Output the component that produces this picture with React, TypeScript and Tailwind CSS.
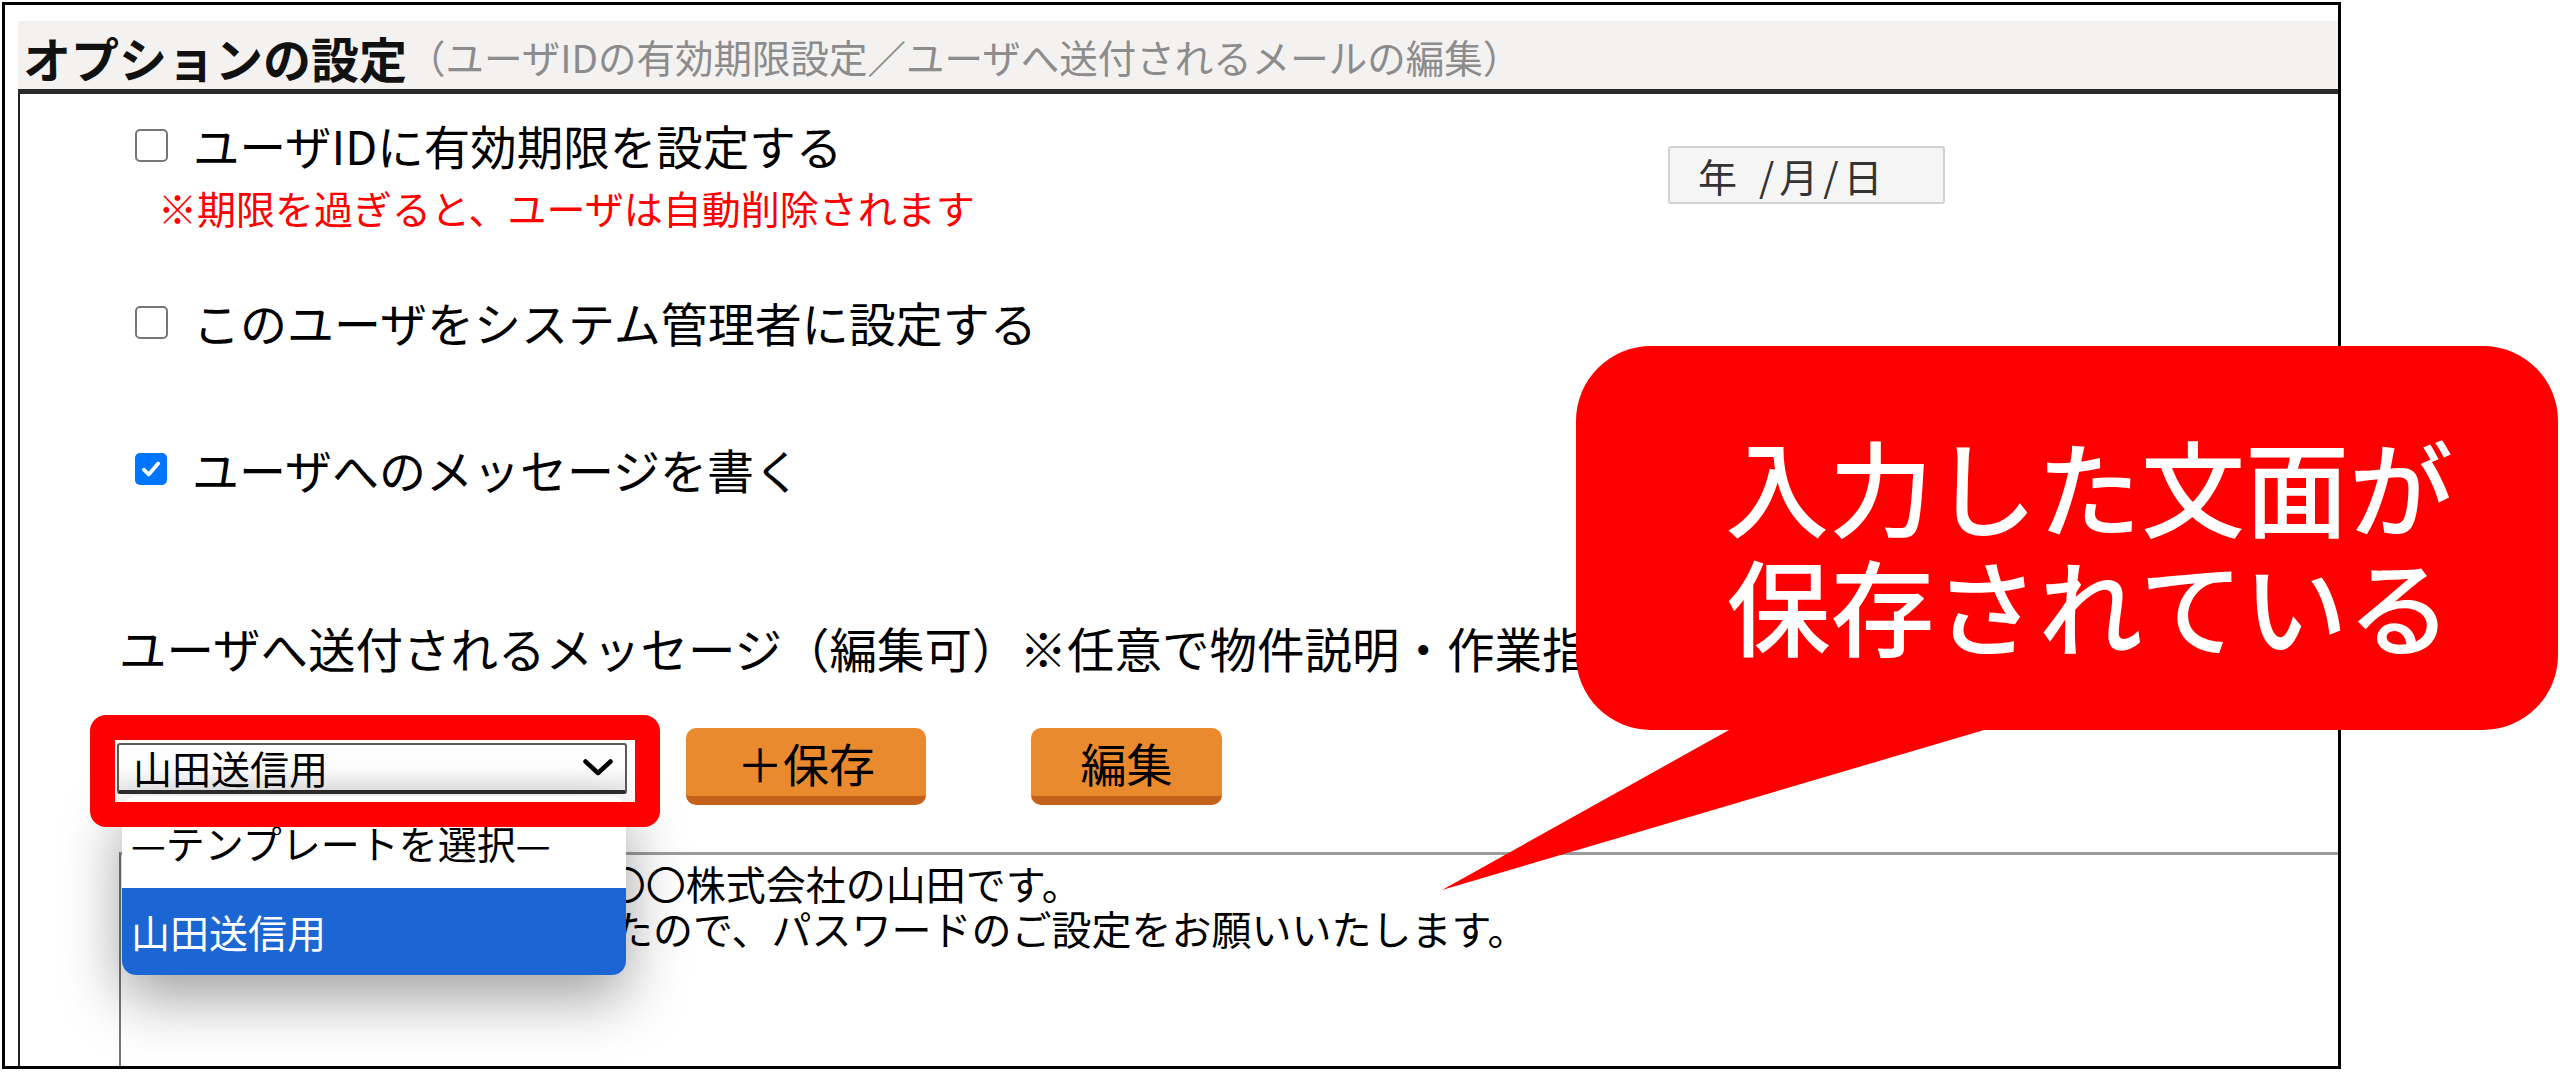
import React from "react";

function Checkbox({ checked = false }: { checked?: boolean }) {
  if (checked) {
    return (
      <span className="flex h-[32px] w-[32px] shrink-0 items-center justify-center rounded-[5px] bg-[#0075ff]">
        <svg viewBox="0 0 16 16" className="h-[26px] w-[26px]">
          <path d="M3.6 8.4 L6.6 11.4 L12.4 4.6" fill="none" stroke="white" strokeWidth="2.3" strokeLinecap="round" strokeLinejoin="round" />
        </svg>
      </span>
    );
  }
  return <span className="h-[33px] w-[33px] shrink-0 rounded-[5px] border-2 border-[#767676] bg-white" />;
}

function OrangeButton({ label, width }: { label: string; width: string }) {
  return (
    <button className={`${width} flex h-[77px] items-center justify-center rounded-[10px] border-b-[9px] border-[#c4621b] bg-[#e88a2d] text-[46px] leading-none text-black`}>
      {label}
    </button>
  );
}

function TemplateSelect() {
  return (
    <div className="relative ml-[97px] mt-[15px]">
      <div className="relative z-10 flex h-[51px] w-[510px] items-center justify-between rounded-[3px] border-2 border-b-[4px] border-[#5a5a5a] border-b-[#2e2e2e] bg-gradient-to-b from-white via-white to-[#ececec] pl-[14px] pr-[12px]">
        <span className="text-[39px] leading-none">山田送信用</span>
        <svg width="30" height="17" viewBox="0 0 30 17">
          <polyline points="2.5,2.5 15,14 27.5,2.5" fill="none" stroke="black" strokeWidth="4.5" strokeLinecap="round" strokeLinejoin="round" />
        </svg>
      </div>

      {/* opened option list */}
      <div className="absolute left-[5px] top-[53px] z-10 w-[504px] overflow-hidden rounded-[14px] bg-white shadow-[0_22px_60px_rgba(0,0,0,0.38)]">
        <div className="flex h-[92px] items-center pl-[9px] text-[39px] leading-none">—テンプレートを選択—</div>
        <div className="flex h-[87px] items-center bg-[#1b66d2] pl-[9px] text-[39px] leading-none text-white">山田送信用</div>
      </div>

      {/* annotation frame */}
      <div className="pointer-events-none absolute left-[-27px] top-[-28px] z-20 h-[112px] w-[570px] rounded-[16px] border-[25px] border-[#ff0000]" />
    </div>
  );
}

function OptionPanel() {
  return (
    <div className="flex min-h-0 flex-1 flex-col">
      <div className="flex h-[73px] shrink-0 items-center border-b-[5px] border-[#2b2b2b] bg-[#f3f2f1] pl-[5px] pt-[3px]">
        <span className="text-[48px] font-bold leading-none text-[#111]">オプションの設定</span>
        <span className="text-[38.5px] leading-none text-[#8c8c8c]">（ユーザIDの有効期限設定／ユーザへ送付されるメールの編集）</span>
      </div>

      <div className="flex min-h-0 flex-1 flex-col border-l-2 border-[#222] pt-[23px]">
        <div className="flex">
          <div className="ml-[115px] w-[1533px] shrink-0">
            <label className="flex h-[56px] items-center gap-[25px] text-[46.5px] leading-[56px]">
              <Checkbox />
              ユーザIDに有効期限を設定する
            </label>
            <p className="ml-[23px] mt-[10px] text-[39px] leading-[48px] text-[#ff0000]">※期限を過ぎると、ユーザは自動削除されます</p>
          </div>
          <div className="mt-[29px] flex h-[58px] w-[277px] items-center rounded-[3px] border-2 border-[#d2d2d2] bg-[#f5f5f5] pl-[28px] text-[39px] leading-none text-[#333]">
            <span>年</span>
            <span className="ml-[22px] tracking-[5px]">/月/日</span>
          </div>
        </div>

        <label className="ml-[115px] mt-[63px] flex h-[56px] items-center gap-[25px] text-[47px] leading-[56px]">
          <Checkbox />
          このユーザをシステム管理者に設定する
        </label>

        <label className="ml-[115px] mt-[91px] flex h-[56px] items-center gap-[25px] text-[47px] leading-[56px]">
          <Checkbox checked />
          ユーザへのメッセージを書く
        </label>

        <p className="ml-[99px] mt-[123px] whitespace-nowrap text-[47.5px] leading-[56px]">
          ユーザへ送付されるメッセージ（編集可）※任意で物件説明・作業指示を記入
        </p>

        <div className="mt-[52px] flex items-start">
          <TemplateSelect />
          <div className="ml-[59px]">
            <OrangeButton label="＋保存" width="w-[240px]" />
          </div>
          <div className="ml-[105px]">
            <OrangeButton label="編集" width="w-[191px]" />
          </div>
        </div>

        <div className="ml-[99px] mt-[47px] min-h-0 flex-1 border-l-2 border-t-[3px] border-l-[#777] border-t-[#9c9c9c] pl-[12px] pt-[6px] text-[40px] leading-[45px]">
          <p className="whitespace-nowrap">お世話になっております。〇〇株式会社の山田です。</p>
          <p className="whitespace-nowrap">アカウントを発行致しましたので、パスワードのご設定をお願いいたします。</p>
        </div>
      </div>
    </div>
  );
}

function Callout() {
  return (
    <>
      <svg className="absolute left-[1430px] top-[700px] z-30" width="600" height="200" viewBox="0 0 600 200">
        <polygon points="317,20 588,20 12,190" fill="#ff0000" />
      </svg>
      <div className="absolute left-[1576px] top-[346px] z-30 flex h-[384px] w-[982px] flex-col items-center justify-center rounded-[75px] bg-[#ff0000] pl-[44px] pt-[12px] text-[104px] font-medium leading-[119px] text-white">
        <span>入力した文面が</span>
        <span>保存されている</span>
      </div>
    </>
  );
}

export default function App() {
  return (
    <div className="relative h-[1072px] w-[2560px] overflow-hidden bg-white font-['Noto_Sans_CJK_JP','Noto_Sans',sans-serif] text-black">
      <div className="ml-[2px] mt-[2px] flex h-[1067px] w-[2339px] flex-col border-[3px] border-black pl-[13px] pt-[16px]">
        <OptionPanel />
      </div>
      <Callout />
    </div>
  );
}
